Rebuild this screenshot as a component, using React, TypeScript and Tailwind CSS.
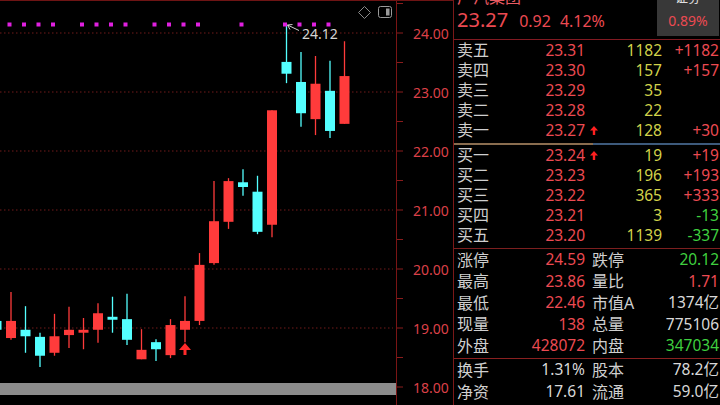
import React from 'react';

type Candle = { o: number; c: number; h: number; l: number; dot?: boolean };

// daily bars, oldest first
const CANDLES: Candle[] = [
  { o: 19.12, c: 18.97, h: 19.2, l: 18.88 },
  { o: 18.83, c: 19.12, h: 19.61, l: 18.8, dot: true },
  { o: 18.97, c: 18.86, h: 19.37, l: 18.58, dot: true },
  { o: 18.85, c: 18.53, h: 18.92, l: 18.34, dot: true },
  { o: 18.58, c: 18.86, h: 19.24, l: 18.53, dot: true },
  { o: 18.88, c: 18.97, h: 19.36, l: 18.66 },
  { o: 18.92, c: 18.97, h: 19.17, l: 18.64, dot: true },
  { o: 18.97, c: 19.25, h: 19.42, l: 18.75, dot: true },
  { o: 19.19, c: 19.14, h: 19.53, l: 18.92, dot: true },
  { o: 19.15, c: 18.8, h: 19.58, l: 18.71, dot: true },
  { o: 18.47, c: 18.63, h: 18.98, l: 18.47 },
  { o: 18.76, c: 18.64, h: 18.81, l: 18.44, dot: true },
  { o: 18.54, c: 19.05, h: 19.15, l: 18.49, dot: true },
  { o: 18.97, c: 19.12, h: 19.54, l: 18.76, dot: true },
  { o: 19.12, c: 20.07, h: 20.27, l: 19.05, dot: true },
  { o: 20.1, c: 20.81, h: 21.49, l: 20.07 },
  { o: 20.8, c: 21.49, h: 21.54, l: 20.68 },
  { o: 21.47, c: 21.39, h: 21.69, l: 21.24, dot: true },
  { o: 21.31, c: 20.63, h: 21.58, l: 20.59 },
  { o: 20.75, c: 22.69, h: 22.69, l: 20.54 },
  { o: 23.51, c: 23.31, h: 24.12, l: 23.15, dot: true },
  { o: 23.17, c: 22.64, h: 23.68, l: 22.41, dot: true },
  { o: 22.54, c: 23.14, h: 23.61, l: 22.27, dot: true },
  { o: 23.02, c: 22.34, h: 23.53, l: 22.22, dot: true },
  { o: 22.46, c: 23.27, h: 23.86, l: 22.46 },
];

const LEVELS = [24, 23, 22, 21, 20, 19, 18];
const UP = '#ff3b3b';
const DOWN = '#54ffff';
const GRID = '#701a1a';

const Y = (p: number) => 32 + (24 - p) * 59;
const X = (i: number) => -3.5 + i * 14.5;

function PriceChart() {
  return (
    <svg width={396} height={382} className="block">
      {LEVELS.map((p) => (
        <line key={p} x1={0} x2={393} y1={Y(p)} y2={Y(p)} stroke={GRID} strokeDasharray="1.5 2.5" />
      ))}
      {CANDLES.map((k, i) => {
        const x = X(i);
        const color = k.c >= k.o ? UP : DOWN;
        const top = Y(Math.max(k.o, k.c));
        const bot = Y(Math.min(k.o, k.c));
        return (
          <g key={i}>
            <line x1={x} x2={x} y1={Y(k.h)} y2={Y(k.l)} stroke={color} strokeWidth={1.3} />
            <rect x={x - 5} y={top} width={10} height={Math.max(bot - top, 2)} fill={color} />
            {k.dot && <rect x={x - 3.5} y={21.5} width={4} height={4} fill="#e020e0" />}
          </g>
        );
      })}
      {/* buy signal under bar 13 */}
      <polygon points={`${X(13) - 6},349 ${X(13)},342 ${X(13) + 6},349`} fill="#ff2a2a" />
      <rect x={X(13) - 1.5} y={349} width={3} height={5} fill="#ff2a2a" />
      {/* high marker */}
      <line x1={287.5} y1={24} x2={299} y2={29.5} stroke="#cfcfcf" strokeWidth={1} />
      <polyline points="292.5,23.5 287.5,24 290,28.5" fill="none" stroke="#cfcfcf" strokeWidth={1} />
      <text x={302} y={32} dominantBaseline="central" fontSize={14} fill="#d4d4d4">24.12</text>
      {/* toolbar */}
      <polygon points="364.5,5.5 370.5,11.5 364.5,17.5 358.5,11.5" fill="none" stroke="#8a8a8a" strokeWidth={1} />
      <rect x={378.5} y={5.5} width={13} height={11} rx={2} fill="none" stroke="#9a9a9a" strokeWidth={1} />
      <rect x={386} y={7.5} width={3.5} height={7} fill="#9a9a9a" />
    </svg>
  );
}

function PriceAxis() {
  const minor = [24.5, 23.5, 22.5, 21.5, 20.5, 19.5, 18.5];
  return (
    <svg width={56} height={404} className="block">
      {[...LEVELS, ...minor].map((p) => (
        <line key={p} x1={0} x2={6} y1={Y(p)} y2={Y(p)} stroke="#8a1c1c" strokeWidth={1} />
      ))}
      {LEVELS.map((p) => (
        <text key={p} x={16} y={Y(p)} dominantBaseline="central" fontSize={14} fill="#dc4048">
          {p.toFixed(2)}
        </text>
      ))}
    </svg>
  );
}

function UpArrow() {
  return (
    <svg width={8} height={9} viewBox="0 0 8 9" className="block">
      <polygon points="0,4.5 4,0 8,4.5" fill="#ff2020" />
      <rect x={2.8} y={4} width={2.4} height={5} fill="#ff2020" />
    </svg>
  );
}

type Level = { label: string; price: string; vol: string; diff: string; tick?: boolean };

const ASKS: Level[] = [
  { label: '卖五', price: '23.31', vol: '1182', diff: '+1182' },
  { label: '卖四', price: '23.30', vol: '157', diff: '+157' },
  { label: '卖三', price: '23.29', vol: '35', diff: '' },
  { label: '卖二', price: '23.28', vol: '22', diff: '' },
  { label: '卖一', price: '23.27', vol: '128', diff: '+30', tick: true },
];

const BIDS: Level[] = [
  { label: '买一', price: '23.24', vol: '19', diff: '+19', tick: true },
  { label: '买二', price: '23.23', vol: '196', diff: '+193' },
  { label: '买三', price: '23.22', vol: '365', diff: '+333' },
  { label: '买四', price: '23.21', vol: '3', diff: '-13' },
  { label: '买五', price: '23.20', vol: '1139', diff: '-337' },
];

const RED = 'text-[#ec4a52]';
const GREEN = 'text-[#3fcf3f]';
const WHITE = 'text-[#d8d8d8]';

function BookRow({ row }: { row: Level }) {
  return (
    <div className="flex items-center h-[20px] leading-[20px]">
      <span className="w-[40px] text-[16px] text-[#cfcfcf]">{row.label}</span>
      <span className={`w-[88px] text-right ${RED}`}>{row.price}</span>
      <span className="w-[16px] pl-[5px]">{row.tick && <UpArrow />}</span>
      <span className="w-[61px] text-right text-[#d2d24a]">{row.vol}</span>
      <span className={`flex-1 text-right pr-[1px] ${row.diff.startsWith('-') ? GREEN : RED}`}>{row.diff}</span>
    </div>
  );
}

type Stat = [string, string, string, string, string, string];

const STATS: Stat[] = [
  ['涨停', '24.59', RED, '跌停', '20.12', GREEN],
  ['最高', '23.86', RED, '量比', '1.71', RED],
  ['最低', '22.46', RED, '市值A', '1374亿', WHITE],
  ['现量', '138', RED, '总量', '775106', WHITE],
  ['外盘', '428072', RED, '内盘', '347034', GREEN],
];

const SHARES: Stat[] = [
  ['换手', '1.31%', WHITE, '股本', '78.2亿', WHITE],
  ['净资', '17.61', WHITE, '流通', '59.0亿', WHITE],
];

function StatRow({ s, h }: { s: Stat; h: string }) {
  return (
    <div className={`flex items-center ${h}`}>
      <span className="w-[40px] text-[16px] text-[#cfcfcf]">{s[0]}</span>
      <span className={`w-[88px] text-right ${s[2]}`}>{s[1]}</span>
      <span className="ml-[7px] text-[16px] text-[#cfcfcf]">{s[3]}</span>
      <span className={`flex-1 text-right pr-[1px] ${s[5]}`}>{s[4]}</span>
    </div>
  );
}

function QuotePanel() {
  return (
    <div className="w-[267px] h-[405px] border-l border-[#7a1818] flex flex-col text-[15.5px]">
      <div className="h-[40px] border-b border-[#821a22] flex overflow-hidden shrink-0">
        <div className="flex-1 pl-[3px] flex flex-col">
          <div className="-mt-[12px] h-[18px] leading-[18px] text-[16px] text-[#e85a62]">广汽集团</div>
          <div className="flex items-baseline mt-[2px] leading-[24px]">
            <span className={`text-[20px] ${RED}`}>23.27</span>
            <span className={`ml-[11px] text-[16px] ${RED}`}>0.92</span>
            <span className={`ml-[9px] text-[16px] ${RED}`}>4.12%</span>
          </div>
        </div>
        <div className="w-[62px] h-[36px] mr-[1px] bg-[#383838] flex flex-col items-center">
          <div className="-mt-[12px] h-[18px] leading-[18px] text-[13px] text-[#e0e0e0]">证券</div>
          <div className={`mt-[6px] text-[14px] leading-[18px] ${RED}`}>0.89%</div>
        </div>
      </div>
      <div className="pl-[3px]">
        {ASKS.map((r) => (
          <BookRow key={r.label} row={r} />
        ))}
      </div>
      <div className="mt-[3px] h-[2px] flex">
        <div className="w-[139px] bg-[#8a6d4f]" />
        <div className="flex-1 bg-[#3d5a7c]" />
      </div>
      <div className="pl-[3px]">
        {BIDS.map((r) => (
          <BookRow key={r.label} row={r} />
        ))}
      </div>
      <div className="mt-[3px] border-b border-[#7d1f1f]" />
      <div className="pl-[3px]">
        {STATS.map((s) => (
          <StatRow key={s[0]} s={s} h="h-[21.5px]" />
        ))}
      </div>
      <div className="mt-[1px] border-b border-[#8a2020]" />
      <div className="pl-[3px]">
        {SHARES.map((s) => (
          <StatRow key={s[0]} s={s} h="h-[22px]" />
        ))}
      </div>
    </div>
  );
}

export default function App() {
  return (
    <div className="w-[720px] h-[405px] bg-black flex overflow-hidden font-['Noto_Sans','Noto_Sans_CJK_SC',sans-serif]">
      <div className="flex border-t border-[#6e1414] h-[405px]">
        <div className="w-[396px] flex flex-col">
          <PriceChart />
          <div className="h-[12px] bg-[#8c8c8c]" />
        </div>
        <div className="w-[57px] border-l border-[#7a1515]">
          <PriceAxis />
        </div>
      </div>
      <QuotePanel />
    </div>
  );
}
